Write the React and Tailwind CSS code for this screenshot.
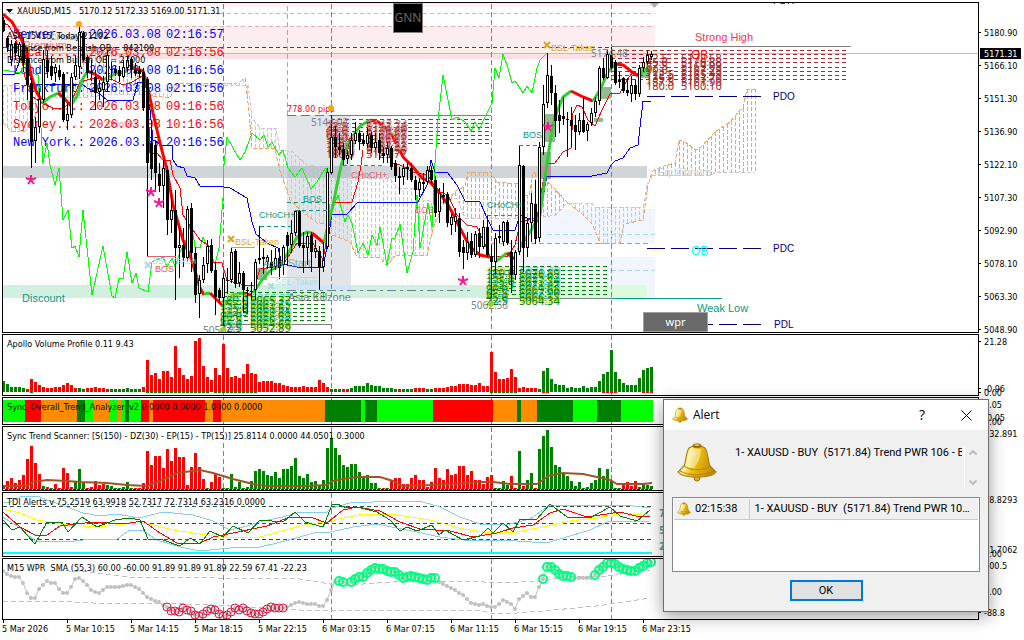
import React from "react";

const UI = '"DejaVu Sans Condensed", "DejaVu Sans", sans-serif';
const SANS = '"Liberation Sans", Arial, sans-serif';
const TAHOMA = '"Noto Sans", sans-serif';

/* Bars are four pixels apart, starting at x = 3. */
const barX = (k) => 3 + 4 * k;

/* Candles: [x, high, low, body top, body bottom, 1 = rising] */
const CANDLES = [
  [3, 17, 32, 20, 31, 0], [7, 36, 52, 38, 47, 0], [11, 40, 66, 44, 60, 1], [15, 41, 60, 43, 53, 0], [19, 42, 62, 44, 57, 1],
  [23, 38, 72, 43, 63, 0], [27, 48, 100, 58, 85, 0], [31, 76, 168, 83, 142, 0], [35, 117, 163, 127, 141, 1], [39, 88, 133, 99, 127, 1],
  [43, 50, 103, 59, 100, 1], [47, 50, 78, 60, 72, 0], [51, 56, 80, 66, 76, 0], [55, 64, 82, 67, 73, 1], [59, 65, 80, 70, 77, 0],
  [63, 72, 122, 74, 120, 0], [67, 103, 130, 114, 121, 1], [71, 73, 118, 77, 115, 1], [75, 55, 80, 65, 77, 1], [79, 27, 79, 32, 67, 1],
  [83, 31, 62, 33, 60, 0], [87, 55, 78, 57, 73, 0], [91, 60, 81, 71, 73, 0], [95, 70, 110, 77, 93, 0], [99, 80, 100, 88, 92, 1],
  [103, 76, 107, 82, 90, 1], [107, 51, 92, 55, 82, 1], [111, 62, 80, 69, 70, 0], [115, 66, 76, 69, 73, 0], [119, 66, 82, 70, 76, 0],
  [123, 60, 78, 67, 77, 1], [127, 56, 72, 60, 68, 1], [131, 57, 78, 59, 70, 0], [135, 63, 76, 69, 73, 0], [139, 66, 78, 70, 74, 0],
  [143, 68, 111, 72, 108, 0], [147, 77, 256, 79, 163, 0], [151, 128, 180, 143, 169, 0], [155, 140, 192, 145, 173, 0], [159, 163, 192, 174, 186, 0],
  [163, 160, 208, 168, 186, 1], [167, 166, 235, 170, 220, 0], [171, 190, 233, 210, 220, 1], [175, 190, 300, 210, 248, 0], [179, 227, 278, 245, 248, 1],
  [183, 228, 267, 245, 258, 0], [187, 206, 261, 209, 258, 1], [191, 203, 272, 208, 253, 0], [195, 247, 303, 253, 295, 0], [199, 275, 318, 280, 294, 1],
  [203, 257, 283, 265, 280, 1], [207, 240, 273, 246, 264, 1], [211, 239, 273, 245, 271, 0], [215, 262, 315, 270, 297, 0], [219, 288, 302, 290, 298, 0],
  [223, 273, 325, 278, 298, 1], [227, 268, 294, 280, 281, 0], [231, 247, 283, 252, 280, 1], [235, 249, 288, 251, 284, 0], [239, 262, 287, 273, 283, 1],
  [243, 271, 313, 273, 290, 0], [247, 287, 314, 290, 291, 0], [251, 282, 300, 291, 292, 0], [255, 259, 300, 262, 290, 1], [259, 226, 264, 258, 259, 1],
  [263, 248, 274, 257, 259, 0], [267, 255, 269, 257, 262, 1], [271, 250, 275, 262, 268, 0], [275, 248, 270, 258, 267, 1], [279, 248, 279, 258, 268, 0],
  [283, 245, 275, 247, 265, 1], [287, 232, 265, 235, 246, 0], [291, 220, 253, 233, 245, 1], [295, 210, 236, 211, 233, 1], [299, 210, 248, 211, 246, 0],
  [303, 232, 273, 245, 248, 0], [307, 232, 265, 236, 248, 1], [311, 232, 272, 235, 252, 0], [315, 240, 258, 248, 252, 1], [319, 246, 290, 251, 267, 0],
  [323, 242, 272, 260, 267, 1], [327, 168, 249, 172, 247, 1], [331, 115, 174, 137, 173, 1], [335, 126, 158, 137, 147, 0], [339, 133, 155, 147, 150, 0],
  [343, 143, 166, 149, 160, 0], [347, 150, 164, 155, 159, 1], [351, 133, 160, 140, 155, 1], [355, 122, 144, 133, 141, 1], [359, 130, 150, 133, 142, 0],
  [363, 133, 146, 140, 144, 0], [367, 128, 148, 135, 144, 1], [371, 132, 153, 135, 148, 0], [375, 133, 150, 142, 148, 1], [379, 133, 160, 140, 153, 0],
  [383, 147, 163, 153, 156, 0], [387, 142, 163, 148, 155, 1], [391, 146, 170, 148, 167, 0], [395, 160, 182, 163, 176, 0], [399, 167, 194, 176, 178, 0],
  [403, 164, 185, 168, 177, 1], [407, 163, 180, 167, 169, 1], [411, 163, 182, 168, 180, 0], [415, 176, 200, 180, 190, 0], [419, 178, 197, 182, 190, 1],
  [423, 173, 192, 182, 184, 0], [427, 166, 184, 170, 182, 1], [431, 166, 184, 170, 180, 0], [435, 176, 217, 180, 213, 0], [439, 188, 223, 193, 212, 1],
  [443, 183, 203, 195, 197, 1], [447, 192, 227, 194, 223, 0], [451, 214, 235, 217, 225, 1], [455, 208, 232, 216, 222, 1], [459, 213, 257, 218, 252, 0],
  [463, 240, 269, 247, 253, 0], [467, 232, 260, 242, 253, 1], [471, 233, 258, 241, 255, 0], [475, 231, 257, 234, 255, 1], [479, 228, 258, 233, 247, 0],
  [483, 220, 249, 227, 247, 1], [487, 215, 257, 227, 255, 0], [491, 245, 298, 256, 262, 0], [495, 233, 275, 238, 262, 1], [499, 225, 243, 236, 238, 0],
  [503, 221, 246, 222, 242, 1], [507, 220, 245, 222, 243, 0], [511, 240, 293, 252, 275, 0], [515, 250, 280, 252, 275, 1], [519, 145, 255, 165, 252, 1],
  [523, 165, 272, 166, 248, 0], [527, 218, 257, 223, 248, 1], [531, 193, 242, 203, 223, 1], [535, 180, 244, 204, 239, 0], [539, 142, 242, 147, 238, 1],
  [543, 85, 155, 104, 147, 1], [547, 53, 108, 75, 103, 1], [551, 65, 105, 76, 93, 0], [555, 85, 137, 93, 121, 0], [559, 100, 133, 115, 121, 0],
  [563, 97, 125, 116, 119, 0], [567, 112, 157, 119, 120, 0], [571, 107, 147, 120, 126, 0], [575, 115, 150, 125, 132, 0], [579, 113, 135, 120, 132, 1],
  [583, 97, 133, 120, 132, 0], [587, 122, 141, 124, 131, 1], [591, 108, 126, 113, 123, 1], [595, 97, 117, 101, 113, 1], [599, 66, 105, 68, 101, 1],
  [603, 58, 80, 68, 78, 0], [607, 50, 79, 54, 78, 1], [611, 47, 70, 54, 68, 0], [615, 60, 85, 62, 83, 0], [619, 72, 88, 80, 82, 0],
  [623, 77, 93, 78, 91, 0], [627, 78, 96, 90, 93, 0], [631, 76, 102, 85, 94, 1], [635, 80, 100, 85, 94, 0], [639, 65, 97, 68, 94, 1],
  [643, 57, 72, 62, 68, 1], [647, 51, 65, 55, 62, 1], [651, 51, 60, 54, 57, 1],
];

const THICK = [
  ["red", "3,14 12,22 20,36 27,53 31,75 36,91 41,100"],
  ["green", "42,103 50,97 58,93"],
  ["red", "58,93 64,98 71,106"],
  ["green", "71,105 77,96 82,80 87,72"],
  ["red", "87,71 95,74 103,80"],
  ["green", "103,80 117,73 127,71"],
  ["red", "133,68 143,71 148,88 153,113 160,143 167,170 173,205 183,240 191,258 200,288 204,295"],
  ["green", "204,294 210,293"],
  ["red", "210,293 218,301 224,307"],
  ["green", "222,307 233,295 243,293"],
  ["red", "243,294 252,295"],
  ["green", "253,293 262,280 270,271 280,265 290,250 297,237 307,232 312,233"],
  ["red", "312,233 318,238 324,243"],
  ["green", "324,243 328,225 333,205 337,185 341,166 348,143 360,126 370,120"],
  ["red", "370,120 378,122 388,130 397,144 403,157 413,167 422,178 430,182 437,190 447,203 453,214 460,228 470,247 480,255 490,257"],
  ["green", "495,262 507,253"],
  ["red", "507,253 514,259"],
  ["green", "518,250 530,232 540,215 545,178 550,143 555,117 563,97 571,91"],
  ["red", "571,91 583,97 593,101"],
  ["green", "593,101 600,90 608,72 615,64"],
  ["red", "615,64 623,65 632,72 638,76"],
  ["green", "640,74 645,70 649,68"],
];

const RED_THIN = [
  "3,23 8,25 13,33 20,50 25,77 33,97 42,103 53,108 63,109 72,100 80,82 94,78 113,80 123,85 132,82 144,75 148,100 150,153 157,153 163,160 170,160 173,175 180,188 183,215 193,230 200,240 212,248 213,262 222,263 227,280 233,282 245,285 255,285 260,269 283,265 297,243 313,243 323,260 328,232 333,202 352,202 358,182 361,165 363,150",
  "383,142 392,163 400,165 413,172 427,175 440,192 448,195 457,215 467,225 477,227 483,240 490,256 507,257 515,245 518,232 520,222 537,218 543,182 547,165 548,163 555,163 563,152 571,148 573,113 577,105 582,107 588,120 595,126 602,110 610,94 620,93 627,80 633,72 643,76",
];

const BLUE = "3,74 15,74 20,60 25,55 32,84 82,84 87,88 97,92 107,100 133,100 138,82 145,82 150,110 153,140 162,145 172,145 173,160 177,166 184,168 187,176 195,178 200,186 218,186 230,188 247,198 252,222 256,234 267,243 278,248 282,264 297,267 323,267 327,247 332,214 347,214 358,202 418,202 427,185 431,160 435,172 447,172 457,185 465,201 480,202 487,218 493,230 515,230 520,215 537,222 542,202 547,176 592,176 607,173 611,165 615,161 623,158 630,148 638,145 643,101 651,101";

const LIME = "3,70 20,73 25,63 32,73 38,75 43,163 47,143 50,165 55,185 59,168 63,220 68,210 72,248 75,246 79,257 83,210 92,295 103,246 112,296 115,298 119,278 123,279 127,252 132,283 136,273 139,288 148,292 152,262 163,257 167,267 172,258 175,267 180,252 187,238 191,220 195,247 200,248 203,237 207,245 215,264 219,248 223,198 224,165 227,137 233,148 240,160 245,152 252,133 260,140 264,135 268,147 272,142 279,155 283,150 288,168 295,177 302,168 311,189 317,182 323,172 326,168 330,215 338,195 345,222 348,215 352,223 358,253 363,243 368,255 372,235 377,245 380,227 387,265 392,238 395,238 400,224 407,273 413,252 417,195 420,248 428,203 432,227 435,163 438,120 443,75 452,120 457,117 465,122 471,131 475,122 479,130 485,117 492,103 495,68 499,78 503,54 508,68 512,83 515,81 523,93 527,86 532,93 537,68 540,60 547,53";

const CLOUDS = [
  { c: "#d8bfd8", o: [[3, 123], [12, 132], [25, 131], [32, 122], [42, 102]], t: [[3, 85], [32, 85], [42, 97]] },
  { c: "#f4a460", o: [[42, 102], [75, 85], [88, 50], [130, 55], [143, 90], [153, 96]], t: [[42, 97], [90, 97], [110, 94], [153, 94]] },
  { c: "#d8bfd8", o: [[153, 96], [170, 98], [177, 84], [238, 83], [245, 78], [248, 103], [252, 148], [275, 149], [279, 168], [290, 200], [303, 212], [317, 223], [325, 224], [332, 235], [350, 242], [357, 257], [380, 258], [387, 266], [395, 255], [427, 256], [433, 228], [443, 205]], t: [[153, 94], [180, 85], [248, 85], [252, 118], [260, 128], [276, 128], [280, 150], [293, 152], [307, 165], [330, 168], [350, 178], [390, 178], [397, 188], [417, 188], [423, 200], [443, 203]] },
  { c: "#f4a460", o: [[443, 205], [457, 190], [465, 187], [468, 172], [491, 172], [497, 182], [518, 184], [520, 195], [529, 195], [533, 172], [550, 184], [567, 202]], t: [[443, 203], [457, 198], [465, 218], [537, 218], [556, 215], [567, 203]] },
  { c: "#d8bfd8", o: [[567, 202], [583, 215], [593, 225], [600, 243], [620, 243], [624, 224], [643, 220], [648, 185], [652, 172]], t: [[567, 203], [592, 203], [594, 207], [643, 207], [647, 185], [652, 178]] },
  { c: "#f4a460", o: [[652, 172], [656, 169], [664, 166], [675, 163], [679, 140], [685, 142], [696, 150], [701, 147], [715, 132], [730, 122], [740, 110], [743, 108], [747, 89], [755, 89]], t: [[652, 176], [712, 175], [716, 172], [755, 172]] },
];

function yAt(points, x) {
  for (let i = 1; i < points.length; i++) {
    const [x0, y0] = points[i - 1];
    const [x1, y1] = points[i];
    if (x <= x1) return Math.round(y0 + ((y1 - y0) * (x - x0)) / (x1 - x0));
  }
  return points[points.length - 1][1];
}

function Cloud({ c, o, t }) {
  const columns = [];
  for (let x = Math.ceil((o[0][0] - 3) / 4) * 4 + 3; x <= o[o.length - 1][0]; x += 4) columns.push(x);
  return (
    <g fill="none" strokeWidth="1" shapeRendering="crispEdges">
      {columns.map((x) => (
        <path key={x} d={`M${x + 0.5} ${yAt(o, x)}V${yAt(t, x)}`} stroke={c} strokeDasharray="4 2" />
      ))}
      <polyline points={o.join(" ")} stroke="#f4a460" strokeDasharray="4 2" />
      <polyline points={t.join(" ")} stroke="#d8bfd8" strokeDasharray="4 2" />
    </g>
  );
}

function H({ y, x1, x2, stroke, dash, w = 1 }) {
  return <path d={`M${x1} ${y + w / 2}H${x2}`} stroke={stroke} strokeWidth={w} strokeDasharray={dash} shapeRendering="crispEdges" />;
}

function Sessions({ top = 4, bottom }) {
  return (
    <g stroke="#808080" strokeDasharray="5 3" shapeRendering="crispEdges">
      {[223, 331, 491, 611].map((x) => (
        <path key={x} d={`M${x + 0.5} ${top}V${bottom}`} />
      ))}
    </g>
  );
}

function Label({ x, y, fill = "#000", size = 10, family = UI, weight, opacity, children }) {
  return (
    <text x={x} y={y} fill={fill} fontSize={size} fontFamily={family} fontWeight={weight} opacity={opacity} xmlSpace="preserve">
      {children}
    </text>
  );
}

function Star({ x, y }) {
  return (
    <path
      d={`M${x} ${y - 5}V${y}L${x - 5} ${y - 2}M${x} ${y}L${x + 5} ${y - 2}M${x} ${y}L${x - 3} ${y + 4}M${x} ${y}L${x + 3} ${y + 4}`}
      fill="none"
      stroke="#ff1493"
      strokeWidth="2"
    />
  );
}

function Cross({ x, y, stroke }) {
  return <path d={`M${x - 3} ${y - 3}L${x + 3} ${y + 3}M${x + 3} ${y - 3}L${x - 3} ${y + 3}`} stroke={stroke} strokeWidth="2" />;
}

/* Stacked angle and price levels */
function Levels({ x1, x2, y, rows, fill, under }) {
  return (
    <g fontFamily={TAHOMA} fontSize="11">
      {rows.map(([angle, price], i) => (
        <g key={angle} fill={fill}>
          {under && <text x={x1 + 1} y={y + i * 4 - 2} fill={under[i % 2]}>{angle}</text>}
          {under && <text x={x2 + 1} y={y + i * 4 - 2} fill={under[(i + 1) % 2]}>{price}</text>}
          <text x={x1} y={y + i * 4}>{angle}</text>
          <text x={x2} y={y + i * 4}>{price}</text>
        </g>
      ))}
    </g>
  );
}

const CLOCKS = [
  ["Server...:", "2026.03.08", "02:16:57", "blue"],
  ["Local....:", "2026.03.08", "02:16:56", "red"],
  ["London...:", "2026.03.08", "01:16:56", "blue"],
  ["Frankfurt:", "2026.03.08", "02:16:56", "blue"],
  ["Tokyo....:", "2026.03.08", "09:16:56", "red"],
  ["Sydney...:", "2026.03.08", "10:16:56", "red"],
  ["New York.:", "2026.03.07", "20:16:56", "blue"],
];

function PriceChart() {
  return (
    <Plot top={3} height="h-[329px]" label="XAUUSD M15 price chart">
      <rect x="3" y="3" width="652" height="4" fill="#fdf0f3" />
      <rect x="3" y="26" width="652" height="21" fill="#fbedf0" />
      <rect x="3" y="47" width="652" height="6" fill="#fbf1ea" />
      <rect x="3" y="53" width="644" height="6" fill="#fddfe6" />
      <rect x="3" y="166" width="644" height="12" fill="#d0d5d9" />
      <rect x="3" y="285" width="488" height="13" fill="#d1f0e0" />
      <rect x="543" y="209" width="112" height="34" fill="#f0f5fe" />
      <rect x="519" y="257" width="136" height="41" fill="#f0f5fe" />
      <rect x="491" y="285" width="156" height="13" fill="#dcfbdc" />
      <rect x="287" y="115" width="64" height="175" fill="#778899" opacity="0.22" />
      <rect x="287" y="285" width="64" height="5" fill="#cfe4f8" />
      <H y={13} x1={3} x2={655} stroke="#e8a9b4" dash="4 3" />
      <H y={26} x1={3} x2={655} stroke="#e8a9b4" dash="4 3" />
      <H y={47} x1={3} x2={610} stroke="#e00000" dash="4 3" />
      <H y={53} x1={3} x2={978} stroke="#bdbdbd" />
      <H y={234} x1={547} x2={655} stroke="#a8d4fa" dash="5 3" />
      <H y={270} x1={547} x2={655} stroke="#a8d4fa" dash="5 3" />
      <H y={243} x1={491} x2={651} stroke="#00e5ff" dash="5 3" />
      <Sessions top={4} bottom={332} />
      <path d="M287.5 6V115" stroke="#a9a9a9" strokeDasharray="5 3" shapeRendering="crispEdges" />
      {CLOUDS.map((cloud) => (
        <Cloud key={cloud.o[0][0]} {...cloud} />
      ))}
      {[[545, 114, 10, 28], [541, 152, 10, 27], [601, 87, 10, 12], [594, 118, 9, 4], [641, 68, 9, 10], [257, 268, 10, 12]].map(([x, y, w, h]) => (
        <rect key={x} x={x} y={y} width={w} height={h} fill="#8fbc8f" />
      ))}
      <rect x="541" y="166" width="10" height="13" fill="#c08fa6" />

      <H y={96} x1={647} x2={761} stroke="#000080" dash="18 6" />
      <H y={248} x1={647} x2={761} stroke="#000080" dash="18 6" />
      <H y={324} x1={647} x2={761} stroke="#000080" dash="18 6" />
      <H y={115} x1={287} x2={331} stroke="#5f8080" dash="9 5" />
      <H y={115} x1={331} x2={491} stroke="#808080" />
      <H y={46} x1={611} x2={851} stroke="#808080" />
      <H y={324} x1={225} x2={331} stroke="#808080" />
      <H y={298} x1={491} x2={611} stroke="#808080" />
      <H y={298} x1={611} x2={722} stroke="#089981" />
      <H y={290} x1={287} x2={470} stroke="#708090" dash="9 4 3 4" />
      {[119, 123, 127, 131, 135, 139, 143].map((y) => (
        <H key={y} y={y} x1={331} x2={491} stroke="#a52a2a" dash="4 3" />
      ))}
      {[50, 54, 58, 62, 67, 71, 75, 79].map((y) => (
        <H key={y} y={y} x1={611} x2={849} stroke="#a52a2a" dash="4 3" />
      ))}
      {[292, 296, 300, 304, 308, 312, 316, 320].map((y) => (
        <H key={y} y={y} x1={223} x2={328} stroke="green" dash="4 3" />
      ))}
      {[266, 270, 274, 278, 282, 286, 290, 294].map((y) => (
        <H key={y} y={y} x1={491} x2={608} stroke="green" dash="4 3" />
      ))}

      <Label x={23} y={49} size={11} family={SANS} fill="#f23645" opacity={0.7}>Premium</Label>
      <Label x={50} y={40} size={9} family={SANS} fill="#089981" opacity={0.6}>CHoCH</Label>
      <Label x={106} y={127} size={9} family={SANS} fill="#f23645" opacity={0.6}>CHoCH</Label>
      <g fontFamily='"Liberation Mono", monospace' fontSize="12">
        {CLOCKS.map(([city, date, time, fill], i) => (
          <g key={city} fill={fill}>
            <text x="13" y={38 + i * 18}>{city}</text>
            <text x="89" y={38 + i * 18}>{date}</text>
            <text x="166" y={38 + i * 18}>{time}</text>
          </g>
        ))}
      </g>

      <g fill="none" strokeWidth="1" shapeRendering="crispEdges">
        <polyline points={LIME} stroke="#00ff00" />
        <polyline points={BLUE} stroke="#0000ff" />
        {RED_THIN.map((points) => (
          <polyline key={points} points={points} stroke="#ff0000" />
        ))}
      </g>
      <g fill="none" strokeWidth="3">
        {THICK.map(([color, points]) => (
          <polyline key={points} points={points} stroke={color === "red" ? "#ff0000" : "#32cd32"} />
        ))}
      </g>
      <Levels x1={220} x2={250} y={304} fill="green" under={["#c8d400", "#40d8d8"]} rows={[["180.0", "5065.37"], ["157.5", "5063.25"], ["135.0", "5061.52"], ["112.5", "5059.81"], ["90.0", "5058.09"], ["67.5", "5056.38"], ["45.0", "5054.67"], ["22.5", "5052.89"]]} />
      <Levels x1={486} x2={519} y={277} fill="green" under={["#c8d400", "#40d8d8"]} rows={[["180.0", "5076.89"], ["157.5", "5075.02"], ["135.0", "5073.24"], ["112.5", "5071.47"], ["90.0", "5069.68"], ["67.5", "5067.90"], ["45.0", "5066.12"], ["22.5", "5064.34"]]} />
      <Levels x1={326} x2={366} y={130} fill="#a52a2a" under={["#d8a0b0", "#c08080"]} rows={[["22.5", "5142.24"], ["45.0", "5140.46"], ["67.5", "5138.67"], ["90.0", "5136.89"], ["112.5", "5135.11"], ["135.0", "5133.33"], ["157.5", "5131.55"], ["180.0", "5129.77"]]} />
      <Levels x1={646} x2={681} y={62} fill="#a52a2a" rows={[["22.5", "5172.68"], ["45.0", "5170.88"], ["67.5", "5169.09"], ["90.0", "5167.29"], ["112.5", "5165.49"], ["135.0", "5163.70"], ["157.5", "5161.90"], ["180.0", "5160.10"]]} />

      <g shapeRendering="crispEdges">
        {CANDLES.map(([x, high, low, top, bottom, up]) => (
          <g key={x}>
            <rect x={x} y={high} width="1" height={low - high} fill="#000" />
            {up ? (
              <rect x={x - 0.5} y={top + 0.5} width="2" height={Math.max(bottom - top - 1, 1)} fill="#fff" stroke="#000" />
            ) : (
              <rect x={x - 1} y={top} width="3" height={Math.max(bottom - top, 1)} fill="#000" />
            )}
          </g>
        ))}
      </g>

      <H y={256} x1={147} x2={176} stroke="#e06070" />
      <H y={247} x1={231} x2={255} stroke="#daa520" />
      <H y={226} x1={260} x2={291} stroke="#089981" dash="4 3" />
      <H y={210} x1={295} x2={327} stroke="#089981" dash="4 3" />
      <H y={202} x1={287} x2={327} stroke="#089981" dash="4 3" />
      <H y={165} x1={343} x2={383} stroke="#f23645" dash="4 3" />
      <H y={277} x1={271} x2={315} stroke="#add8e6" />
      <H y={215} x1={487} x2={519} stroke="#089981" dash="4 3" />
      <H y={145} x1={519} x2={541} stroke="#089981" dash="4 3" />
      <g>
        <Label x={155} y={272} size={9} family={SANS} fill="#f23645" opacity={0.85}>BOS</Label>
        <Label x={152} y={264} size={9} family={SANS} fill="#a8dce8">SSL-Taken</Label>
        <Label x={235} y={245} size={9} family={SANS} fill="#daa520">BSL-Taken</Label>
        <Label x={259} y={218} size={9} family={SANS} fill="#089981">CHoCH+</Label>
        <Label x={303} y={202} size={9} family={SANS} fill="#089981">BOS</Label>
        <Label x={275} y={285} size={9} family={SANS} fill="#a8dce8">SSL-Taken</Label>
        <Label x={351} y={178} size={9} family={SANS} fill="#f23645" opacity={0.8}>CHoCH+</Label>
        <Label x={415} y={213} size={9} family={SANS} fill="#f23645" opacity={0.7}>BOS</Label>
        <Label x={487} y={208} size={9} family={SANS} fill="#089981">CHoCH+</Label>
        <Label x={523} y={138} size={9} family={SANS} fill="#089981">BOS</Label>
        <Label x={551} y={51} size={9} family={SANS} fill="#daa520">BSL-Taken</Label>
        <Label x={263} y={267} size={11} family={SANS} fill="#5f9ea0" opacity={0.8}>Asia Start</Label>
        <Label x={288} y={301} size={11} family={SANS} fill="#708090">Asia Killzone</Label>
        <Label x={657} y={176} size={11} family={SANS} fill="#c8ccd0">Equilibrium</Label>
        <Label x={22} y={302} size={11} family={SANS} fill="#089981">Discount</Label>
        <Label x={695} y={41} size={11} family={SANS} fill="#f23645">Strong High</Label>
        <Label x={697} y={312} size={11} family={SANS} fill="#089981">Weak Low</Label>
        <Label x={691} y={59} size={12} family={SANS} fill="#ff0000">OB</Label>
        <Label x={691} y={255} size={12} family={SANS} fill="#00ffff">OB</Label>
        <Label x={773} y={4} size={10} family={SANS} fill="#000080">PDH</Label>
        <Label x={773} y={100} size={10} family={SANS} fill="#000080">PDO</Label>
        <Label x={773} y={252} size={10} family={SANS} fill="#000080">PDC</Label>
        <Label x={774} y={328} size={10} family={SANS} fill="#000080">PDL</Label>
        <Label x={287} y={112} size={9} fill="#ff0000">778.00 pips</Label>
        <Label x={311} y={126} size={10} family={TAHOMA} fill="#808080">5144.02</Label>
        <Label x={591} y={57} size={10} family={TAHOMA} fill="#808080">5174.48</Label>
        <Label x={471} y={309} size={10} family={TAHOMA} fill="#808080">5062.56</Label>
        <Label x={203} y={334} size={10} family={TAHOMA} fill="#808080">5054.23</Label>
      </g>
      <Cross x={148} y={265} stroke="#add8e6" />
      <Cross x={271} y={286} stroke="#add8e6" />
      <Cross x={231} y={239} stroke="#daa520" />
      <Cross x={547} y={45} stroke="#daa520" />
      <circle cx="79" cy="24" r="3" fill="#ffa500" />
      <circle cx="331" cy="108" r="3" fill="#ffa500" />
      <circle cx="491" cy="304" r="3" fill="#9acd32" />
      <circle cx="223" cy="330" r="3" fill="#9acd32" />
      <circle cx="31" cy="178" r="2" fill="#9acd32" />
      {[[31, 180], [151, 192], [159, 203], [463, 281], [548, 127]].map(([x, y]) => (
        <Star key={x} x={x} y={y} />
      ))}
      <path d="M650 3H659L654.500 8Z" fill="#b0b0b0" />
      <path d="M6 9H13L9.500 13Z" fill="#000" />
      <Label x={17} y={14} size={9}>XAUUSD,M15   5170.12 5172.33 5169.00 5171.31</Label>
      <Label x={7} y={39} size={9}>ASR 15415, Today 21192</Label>
      <Label x={7} y={51} size={9}>Distance from Bearish OB = 842100</Label>
      <Label x={7} y={63} size={9}>Distance from Bullish OB = 27000</Label>
    </Plot>
  );
}

/* Volume bar heights, one per bar */
const VOLUME = [
  11, 8, 5, 5, 5, 4, 3, 13, 10, 7, 5, 4, 4, 5, 5, 7, 9, 7, 4, 4, 3, 4, 4, 5, 4, 4, 3, 3, 3, 3, 3, 4, 3, 3, 3, 5, 32, 17, 19, 13, 21,
  21, 15, 46, 24, 17, 13, 16, 51, 54, 26, 15, 12, 24, 17, 48, 24, 15, 16, 14, 18, 28, 19, 18, 10, 11, 11, 11, 9, 9, 7, 6, 5, 5, 5, 6, 5,
  5, 5, 12, 9, 5, 3, 3, 3, 3, 3, 4, 6, 6, 6, 9, 7, 6, 6, 4, 4, 4, 3, 3, 3, 3, 3, 4, 4, 4, 3, 3, 4, 4, 4, 5, 6, 6, 8, 8, 8, 7, 7, 9,
  6, 6, 40, 20, 13, 13, 14, 23, 15, 4, 5, 4, 4, 4, 3, 21, 24, 13, 8, 7, 7, 4, 5, 4, 4, 6, 4, 5, 5, 11, 18, 20, 42, 20, 13, 9, 7, 7, 7,
  14, 22, 24, 25,
];
const within = (k, ranges) => ranges.some(([from, to]) => k >= from && k <= to);
const VOLUME_UP = [[0, 5], [19, 20], [27, 34], [82, 84], [87, 98], [100, 102], [106, 107], [134, 162]];

function VolumeChart() {
  return (
    <Plot top={335} height="h-[60px]" label="Volume profile">
      <Sessions top={335} bottom={395} />
      <g shapeRendering="crispEdges">
        {VOLUME.map((h, k) => {
          const up = within(k, VOLUME_UP);
          return <rect key={k} x={barX(k) - 1} y={392 - h} width="3" height={h} fill={up ? "green" : "red"} />;
        })}
        {VOLUME.map((h, k) =>
          within(k, [[6, 64], [103, 134]]) ? <rect key={k} x={barX(k) - 1} y={391} width="3" height={h > 12 ? 2 : 1} fill="green" /> : null,
        )}
        {[135, 136, 150, 151, 152, 153, 160, 161, 162].map((k) => (
          <rect key={k} x={barX(k) - 1} y={392} width="3" height="1" fill="red" />
        ))}
      </g>
      <Label x={7} y={347} size={9}>Apollo Volume Profile 0.11 9.43</Label>
    </Plot>
  );
}

const L = "#00ff00";
const R = "#ff0000";
const O = "#ff8c00";
const G = "#008000";
const SEGMENTS = [
  [3, L], [25, R], [41, O], [77, G], [85, L], [93, O], [109, L], [117, O], [121, L], [125, G], [129, L], [141, R], [149, O], [153, R],
  [205, O], [213, R], [221, O], [325, G], [361, L], [365, G], [377, L], [433, R], [493, O], [517, G], [521, O], [537, G], [573, L],
  [597, G], [621, L], [653, null],
];

function TrendStrip() {
  return (
    <Plot top={398} height="h-[26px]" label="Overall trend">
      <Sessions top={398} bottom={424} />
      {SEGMENTS.slice(0, -1).map(([x, color], i) => (
        <rect key={x} x={x} y="400" width={SEGMENTS[i + 1][0] - x} height="22" fill={color} shapeRendering="crispEdges" />
      ))}
      <Label x={7} y={410} size={9}>Sync_Overall_Trend_Analyzer_v2 0.0000 0.0000 1.0000 0.0000</Label>
    </Plot>
  );
}

const SCAN = [
  3, 8, 11, 6, 9, 14, 30, 43, 26, 15, 3, 2, 1, 5, 1, 21, 16, 2, 7, 20, 7, 1, 2, 8, 4, 5, 4, 3, 1, 1, 2, 7, 1, 1, 1, 6, 38, 24, 33, 33, 21,
  40, 28, 41, 32, 32, 4, 22, 36, 22, 10, 1, 7, 16, 12, 1, 1, 15, 2, 7, 1, 2, 8, 18, 20, 18, 14, 13, 17, 11, 20, 20, 23, 31, 13, 11, 15,
  7, 8, 4, 9, 41, 51, 41, 34, 24, 22, 25, 25, 17, 12, 14, 6, 6, 1, 1, 1, 8, 11, 11, 5, 5, 11, 14, 9, 9, 2, 7, 21, 11, 9, 20, 14, 15, 23,
  23, 14, 18, 9, 9, 5, 12, 14, 1, 1, 8, 4, 13, 1, 38, 3, 9, 16, 1, 40, 53, 59, 42, 24, 22, 15, 13, 8, 3, 7, 1, 2, 6, 9, 21, 13, 20, 8,
  1, 1, 5, 7, 3, 8, 2, 5, 4, 3,
];
const SCAN_UP = [[10, 10], [12, 12], [18, 20], [26, 32], [51, 51], [55, 94], [96, 96], [123, 126], [129, 129], [131, 132], [134, 154], [159, 162]];

function ScannerChart() {
  return (
    <Plot top={427} height="h-[63px]" label="Trend scanner">
      <Sessions top={427} bottom={490} />
      <g shapeRendering="crispEdges">
        {SCAN.map((h, k) => (
          <rect key={k} x={barX(k) - 1} y={489 - h} width="3" height={h} fill={within(k, SCAN_UP) ? "green" : "red"} />
        ))}
      </g>
      <H y={489} x1={5} x2={653} stroke="#0000ff" dash="3 1" />
      <polyline
        points="3,486 27,486 33,482 47,480 67,481 80,482 107,483 127,485 147,486 160,481 177,473 200,470 213,473 233,479 253,484 267,486 307,486 327,485 333,481 343,479 357,477 380,477 393,481 402,486 430,485 463,483 477,482 493,482 510,484 537,484 543,480 548,476 563,473 583,474 597,477 610,480 617,484 643,484 652,483"
        fill="none" stroke="#a0522d" strokeWidth="2" />
      <Label x={7} y={439} size={9}>Sync Trend Scanner: [S(150) - DZ(30) - EP(15) - TP(15)] 25.8114 0.0000 44.0501 0.3000</Label>
    </Plot>
  );
}

const TDI = [
  ["#87ceeb", "3,502 10,502 20,497 37,496 50,501 67,507 83,513 100,516 117,514 133,517 143,517 163,512 193,515 213,521 230,530 247,526 263,521 283,517 300,512 327,512 332,508 350,503 397,501 423,502 440,507 460,517 483,525 510,524 530,519 543,510 550,505 633,506 650,508"],
  ["#87ceeb", "3,517 20,528 35,541 67,542 83,540 117,539 130,530 142,530 157,540 180,547 200,551 230,548 260,547 277,543 300,537 317,532 331,532 353,527 377,524 397,528 417,532 440,537 463,540 517,541 547,543 563,538 590,530 607,522 650,521"],
  ["#ffff00", "3,509 20,513 37,520 67,525 100,527 133,523 150,524 173,530 200,534 233,538 260,537 300,526 330,521 363,514 397,515 430,520 463,529 490,533 517,532 543,527 570,521 597,518 623,513 650,516"],
  ["#ff0000", "3,512 20,527 35,535 47,535 60,526 93,522 123,524 143,521 160,533 177,543 200,543 213,537 233,533 267,526 290,517 310,517 327,523 343,510 357,507 380,511 400,522 420,529 450,531 473,537 497,533 513,528 533,525 550,513 563,509 587,517 620,512 640,517 650,516"],
  ["#008000", "3,520 12,530 20,527 35,544 47,522 62,522 68,532 82,517 97,527 115,520 130,518 140,520 148,539 163,540 180,546 190,538 200,544 210,531 223,537 233,526 248,533 260,520 283,522 295,512 305,522 323,527 332,505 337,504 347,508 357,507 377,512 390,520 400,531 407,527 417,531 432,525 439,535 445,530 463,540 480,536 488,528 493,533 503,523 513,532 520,519 537,519 550,504 567,517 590,518 610,507 620,516 637,521 650,510"],
];

function TdiChart() {
  return (
    <Plot top={493} height="h-[63px]" label="TDI">
      <Sessions top={493} bottom={556} />
      {[506, 523, 539].map((y) => (
        <H key={y} y={y} x1={3} x2={652} stroke="#2f4f4f" dash="4 3" />
      ))}
      <H y={552} x1={3} x2={652} stroke="#00ffff" w={2} />
      {TDI.map(([color, points]) => (
        <polyline key={points} points={points} fill="none" stroke={color} shapeRendering="crispEdges" />
      ))}
      <Label x={659} y={517} size={10} weight={700} fill="#5f9ea0">75</Label>
      <Label x={659} y={534} size={10} weight={700} fill="#5f9ea0">50</Label>
      <Label x={659} y={550} size={10} weight={700} fill="#5f9ea0">25</Label>
      <Label x={7} y={505} size={9}>TDI Alerts v 75.2519 63.9918 52.7317 72.7314 63.2316 0.0000</Label>
    </Plot>
  );
}

const WPR = [
  571, 574, 576, 577, 577, 583, 593, 598, 598, 589, 585, 581, 583, 583, 589, 593, 593, 587, 579, 578, 581, 585, 590, 592, 593, 590, 587,
  587, 587, 587, 586, 585, 585, 587, 589, 593, 597, 599, 601, 602, 605, 607, 611, 611, 612, 608, 610, 611, 615, 616, 614, 611, 609, 610,
  614, 616, 615, 612, 608, 610, 608, 611, 613, 614, 614, 612, 609, 607, 608, 608, 608, 607, 605, 603, 602, 603, 604, 604, 604, 606, 606,
  600, 590, 582, 581, 582, 583, 582, 579, 577, 577, 573, 570, 568, 569, 569, 571, 572, 572, 575, 578, 577, 576, 577, 578, 579, 580, 578,
  578, 582, 584, 586, 588, 590, 593, 595, 599, 603, 604, 605, 604, 606, 607, 607, 604, 600, 602, 604, 609, 599, 596, 593, 597, 597, 587,
  579, 567, 567, 570, 574, 576, 576, 577, 578, 578, 578, 578, 578, 575, 570, 567, 563, 563, 564, 567, 569, 570, 571, 571, 568, 566, 563,
  562,
];

function WprChart() {
  return (
    <Plot top={559} height="h-[60px]" label="WPR">
      <Sessions top={559} bottom={619} />
      <g fill="none" stroke="#c0c0c0" strokeDasharray="5 3" shapeRendering="crispEdges">
        <polyline points="50,570 87,572 127,577 300,579 330,584 363,584 407,581 473,581 493,583 543,581 563,577 607,576 630,572 650,570" />
        <polyline points="3,601 50,601 93,603 160,603 233,606 300,610 333,610 477,610 490,613 517,613 543,611 597,606 650,598" />
      </g>
      <polyline points={WPR.map((y, k) => `${barX(k)},${y}`).join(" ")} fill="none" stroke="#c0c0c0" />
      {WPR.map((y, k) => (
        <circle key={k} cx={barX(k)} cy={y} r="2" fill="#c0c0c0" />
      ))}
      {WPR.map((y, k) => {
        const low = within(k, [[41, 70]]);
        const high = within(k, [[84, 85], [87, 108], [135, 142], [148, 162]]);
        return low || high ? (
          <circle key={k} cx={barX(k)} cy={y} r="4" fill="none" stroke={low ? "#dc143c" : "#00ff7f"} strokeWidth={low ? 1 : 2} />
        ) : null;
      })}
      <Label x={7} y={571} size={9}>M15 WPR  SMA (55,3) 60.00 -60.00 91.89 91.89 91.89 22.59 67.41 -22.23</Label>
    </Plot>
  );
}

/* A framed drawing area; its contents use window coordinates. */
function Plot({ top, height, label, children }) {
  return (
    <svg role="img" aria-label={label} className={`block w-full ${height}`}>
      <g transform={`translate(-3 ${-top})`}>{children}</g>
    </svg>
  );
}

function Pane({ children, ticks, top }) {
  return (
    <section className="flex items-start">
      <div className="relative min-w-0 flex-1 border border-black">{children}</div>
      <svg className="h-px w-[45px] shrink-0 overflow-visible">
        <g transform={`translate(-979 ${-top})`}>
          {ticks.map(([y, text, current]) => (
            <g key={text + y}>
              {current ? <rect x="980" y={y - 5} width="41" height="11" fill="#000" /> : <path d={`M979 ${y + 0.5}H981`} stroke="#000" />}
              <Label x={984} y={y + 4} size={9} fill={current ? "#fff" : "#000"}>{text}</Label>
            </g>
          ))}
        </g>
      </svg>
    </section>
  );
}

function Bell({ className }) {
  return (
    <svg viewBox="0 0 40 40" className={className} aria-hidden="true">
      <defs>
        <linearGradient id="brass" x1="0" y1="0" x2="1" y2="0.300">
          <stop offset="0" stopColor="#e8b818" />
          <stop offset="0.350" stopColor="#fff0a0" />
          <stop offset="0.550" stopColor="#ecc010" />
          <stop offset="1" stopColor="#c89000" />
        </linearGradient>
      </defs>
      <circle cx="20" cy="36" r="3" fill="#e0b020" stroke="#a07010" />
      <path d="M16 4C16 1 24 1 24 4L28 6C31 10 31 20 33 24L39 30C36 34 29 35 20 35S4 34 1 30L7 24C9 20 9 10 12 6Z" fill="url(#brass)" stroke="#a87c10" strokeWidth="1.200" />
      <path d="M7 24C13 29 27 29 33 24M3 29C12 34 28 34 37 29" fill="none" stroke="#b08410" />
      <path d="M13 8C11 14 11 20 9 24C12 26 15 26 17 26C22 20 24 13 24 7Z" fill="#fff" opacity="0.450" />
      <path d="M16 4C18 5 22 5 24 4" fill="none" stroke="#8a6008" strokeWidth="2" />
    </svg>
  );
}

function AlertDialog() {
  return (
    <div
      role="dialog"
      aria-labelledby="alert-title"
      className="absolute top-[399px] right-[35px] flex h-[213px] w-[326px] flex-col border border-[#6e6e6e] bg-[#f0f0f0] font-['Roboto',sans-serif] text-[11px] leading-4 text-black shadow-[0_4px_16px_rgba(0,0,0,0.4)]"
    >
      <header className="flex h-[30px] items-center bg-white pl-2 font-['Open_Sans',sans-serif]">
        <Bell className="size-4" />
        <h2 id="alert-title" className="ml-1 flex-1 pl-px text-xs">Alert</h2>
        <button type="button" aria-label="Help" className="w-11 text-sm">?</button>
        <button type="button" aria-label="Close" className="flex w-11 justify-center">
          <svg viewBox="0 0 11 11" className="size-[11px]">
            <path d="M0.500 0.500L10.500 10.500M10.500 0.500L0.500 10.500" stroke="#000" />
          </svg>
        </button>
      </header>
      <div className="flex h-[67px] px-2 pt-3 pb-2">
        <Bell className="mr-[18px] ml-[5px] size-10" />
        <p className="min-w-0 flex-1 overflow-hidden pt-[3px] whitespace-pre">1- XAUUSD - BUY  (5171.84) Trend PWR 106 - BUY</p>
        <div className="mt-1 ml-[2px] flex h-[43px] w-4 flex-col items-center justify-between border-l border-white py-1">
          <svg viewBox="0 0 8 5" className="h-[5px] w-2"><path d="M0.500 4.500L4 1L7.500 4.500" fill="none" stroke="#bcbcbc" strokeWidth="2" /></svg>
          <svg viewBox="0 0 8 5" className="h-[5px] w-2"><path d="M0.500 0.500L4 4L7.500 0.500" fill="none" stroke="#bcbcbc" strokeWidth="2" /></svg>
        </div>
      </div>
      <div className="mx-2 h-[75px] border border-[#828790] bg-white p-px">
        <table className="w-full table-fixed border-collapse bg-[#f0f0f0]">
          <tbody>
            <tr className="h-5 border-b border-[#c8c8c8]">
              <td className="w-[75px] border-r border-[#c8c8c8] p-0">
                <span className="flex items-center gap-1 pl-[3px]">
                  <Bell className="size-[14px]" />
                  02:15:38
                </span>
              </td>
              <td className="truncate p-0 pr-1 pl-[5px] whitespace-pre">1- XAUUSD - BUY  (5171.84) Trend PWR 106 - BUY</td>
            </tr>
          </tbody>
        </table>
      </div>
      <button type="button" className="mx-auto mt-2 h-[21px] w-[73px] border-2 border-[#0078d7] bg-[#e1e1e1]">
        OK
      </button>
    </div>
  );
}

const TIMES = ["5 Mar 2026", "5 Mar 10:15", "5 Mar 14:15", "5 Mar 18:15", "5 Mar 22:15", "6 Mar 03:15", "6 Mar 07:15", "6 Mar 11:15", "6 Mar 15:15", "6 Mar 19:15", "6 Mar 23:15"];

const PRICES = ["5180.90", "5166.10", "5151.30", "5136.90", "5122.10", "5107.30", "5092.90", "5078.10", "5063.30", "5048.90"];

export default function App() {
  return (
    <main className="relative min-h-screen overflow-hidden bg-white pt-[2px] pl-[2px]">
      <div className="flex flex-col gap-px">
        <Pane top={2} ticks={[...PRICES.map((p, i) => [32 + 33 * i, p]), [53, "5171.31", true]]}>
          <PriceChart />
          <button type="button" className="absolute top-0 left-[390px] size-[30px] border border-[#808080] bg-black font-['Noto_Sans',sans-serif] text-xs text-[#696969]">
            GNN
          </button>
          <button type="button" className="absolute bottom-0 left-[640px] h-5 w-[65px] border border-[#a0a0a0] bg-[#696969] font-['Noto_Sans',sans-serif] text-[11px] leading-4 text-white">
            wpr
          </button>
        </Pane>
        <Pane top={334} ticks={[[341, "21.28"], [388, "-0.96"], [392, "0.00"]]}>
          <VolumeChart />
        </Pane>
        <Pane top={397} ticks={[[404, "1.05"], [417, "-0.05"], [421, "0.00"]]}>
          <TrendStrip />
        </Pane>
        <Pane top={426} ticks={[[433, "132.891"]]}>
          <ScannerChart />
        </Pane>
        <Pane top={492} ticks={[[499, "78.8293"], [549, "21.7062"], [553, "0.00"]]}>
          <TdiChart />
        </Pane>
        <Pane top={558} ticks={[[565, "100.5"], [591, "0.00"], [612, "-88.8"]]}>
          <WprChart />
        </Pane>
      </div>
      <ol className="flex overflow-hidden font-['DejaVu_Sans_Condensed','DejaVu_Sans',sans-serif] text-[9px] leading-3 whitespace-nowrap">
        {TIMES.map((time) => (
          <li key={time} className="w-16 shrink-0">
            <span className="ml-px block h-[3px] w-px bg-black" />
            {time}
          </li>
        ))}
      </ol>
      <AlertDialog />
    </main>
  );
}
